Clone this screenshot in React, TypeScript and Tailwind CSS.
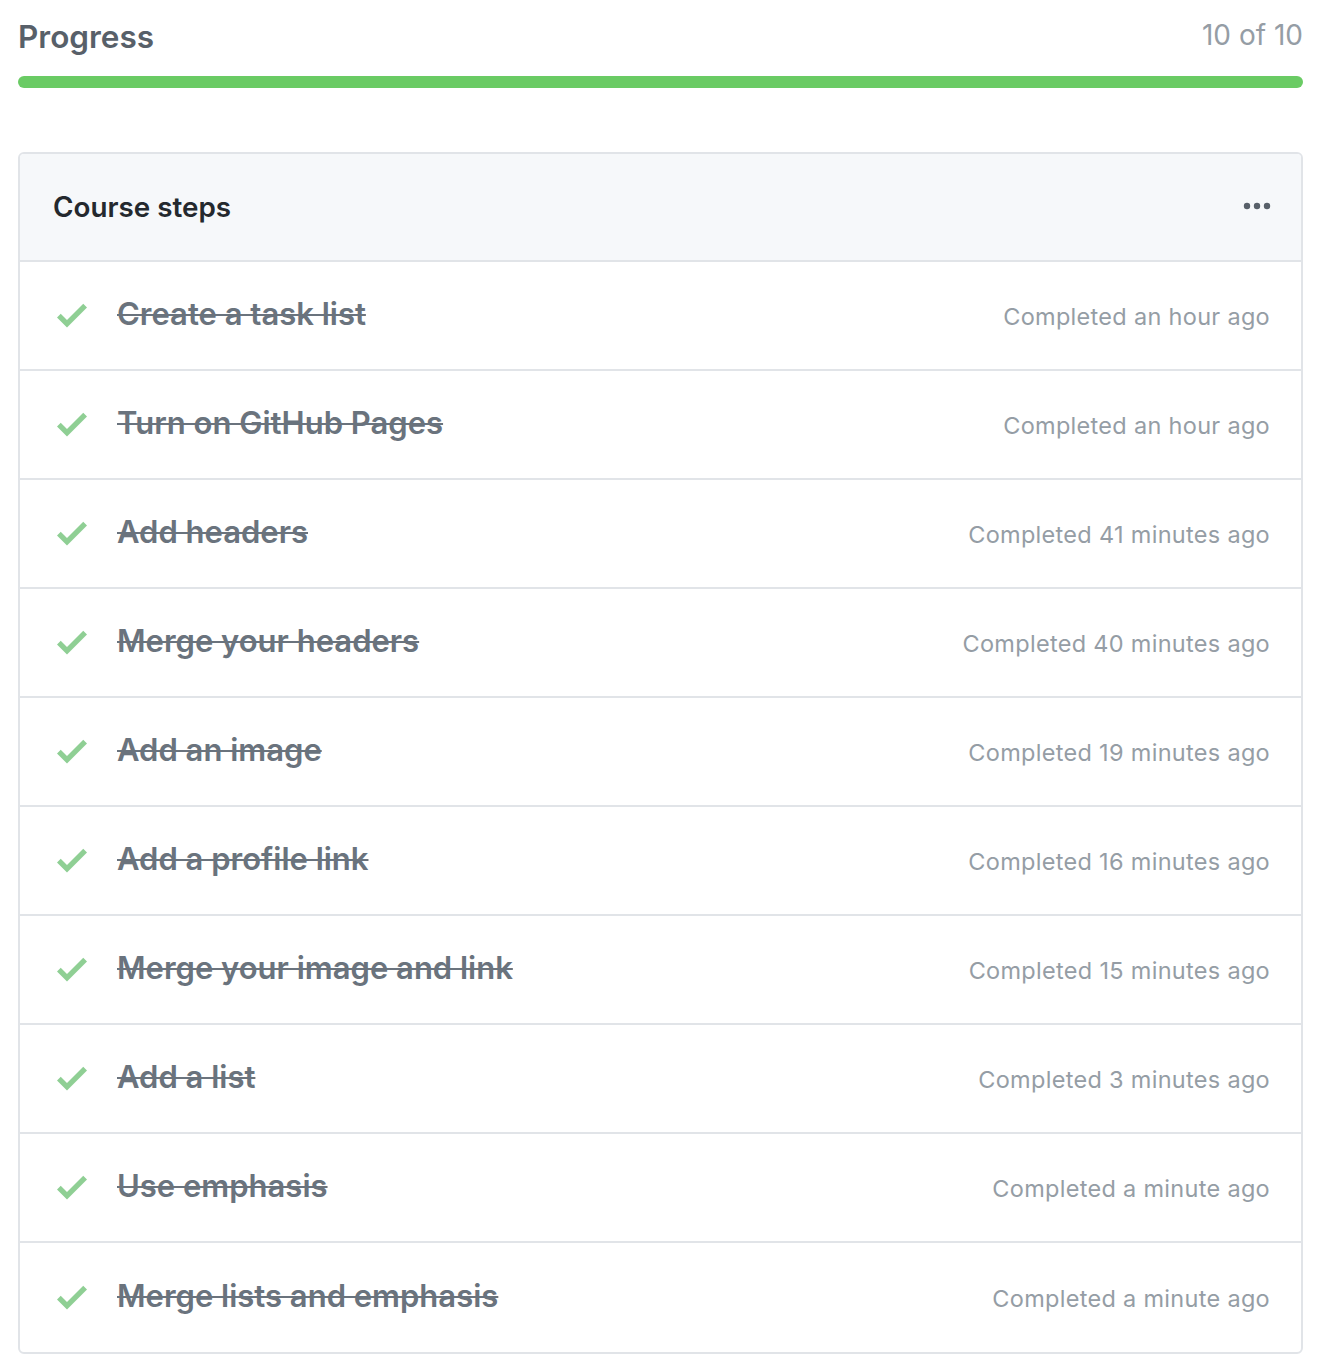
import React from "react";

const steps: [string, string][] = [
  ["Create a task list", "Completed an hour ago"],
  ["Turn on GitHub Pages", "Completed an hour ago"],
  ["Add headers", "Completed 41 minutes ago"],
  ["Merge your headers", "Completed 40 minutes ago"],
  ["Add an image", "Completed 19 minutes ago"],
  ["Add a profile link", "Completed 16 minutes ago"],
  ["Merge your image and link", "Completed 15 minutes ago"],
  ["Add a list", "Completed 3 minutes ago"],
  ["Use emphasis", "Completed a minute ago"],
  ["Merge lists and emphasis", "Completed a minute ago"],
];

function Check() {
  return (
    <svg width="30" height="40" viewBox="0 0 12 16" fill="#8fcf94" className="shrink-0 -mt-[2px]">
      <path fillRule="evenodd" d="M12 5l-8 8-4-4 1.5-1.5L4 10l6.5-6.5L12 5z" />
    </svg>
  );
}

export default function App() {
  return (
    <div className="bg-white pl-[18px] pr-[23px] pt-[14px] pb-[18px]" style={{ fontFamily: "Inter, 'Noto Sans', sans-serif" }}>
      <div className="flex items-start justify-between">
        <div className="text-[31.5px] font-semibold text-[#586069] leading-[46px]">Progress</div>
        <div className="text-[28px] text-[#959da5] leading-[40px] pt-[1px]">10 of 10</div>
      </div>
      <div className="mt-[16px] h-[12px] rounded-full bg-[#6acb64]" />
      <div className="mt-[64px] rounded-[6px] border-2 border-[#e1e4e8] overflow-hidden">
        <div className="flex h-[108px] items-center justify-between bg-[#f6f8fa] pl-[33px] pr-[30px] border-b-2 border-[#e1e4e8]">
          <div className="text-[27.8px] font-semibold text-[#24292e] pt-[2px]">Course steps</div>
          <svg width="28" height="8" viewBox="0 0 28 8" fill="#586069" className="-mt-[2px]">
            <circle cx="4" cy="4" r="3.2" />
            <circle cx="14" cy="4" r="3.2" />
            <circle cx="24" cy="4" r="3.2" />
          </svg>
        </div>
        {steps.map(([t, c], i) => (
          <div
            key={i}
            className={`flex h-[109px] items-center pl-[37px] pr-[31px] ${i < steps.length - 1 ? "border-b-2 border-[#e1e4e8]" : ""}`}
          >
            <Check />
            <div className="ml-[30px] -mt-[2px] flex flex-1 items-baseline justify-between">
              <span className="text-[31px] font-semibold text-[#6a737d] line-through decoration-2">{t}</span>
              <span className="text-[23.5px] text-[#959da5] tracking-[0.3px]">{c}</span>
            </div>
          </div>
        ))}
      </div>
    </div>
  );
}
